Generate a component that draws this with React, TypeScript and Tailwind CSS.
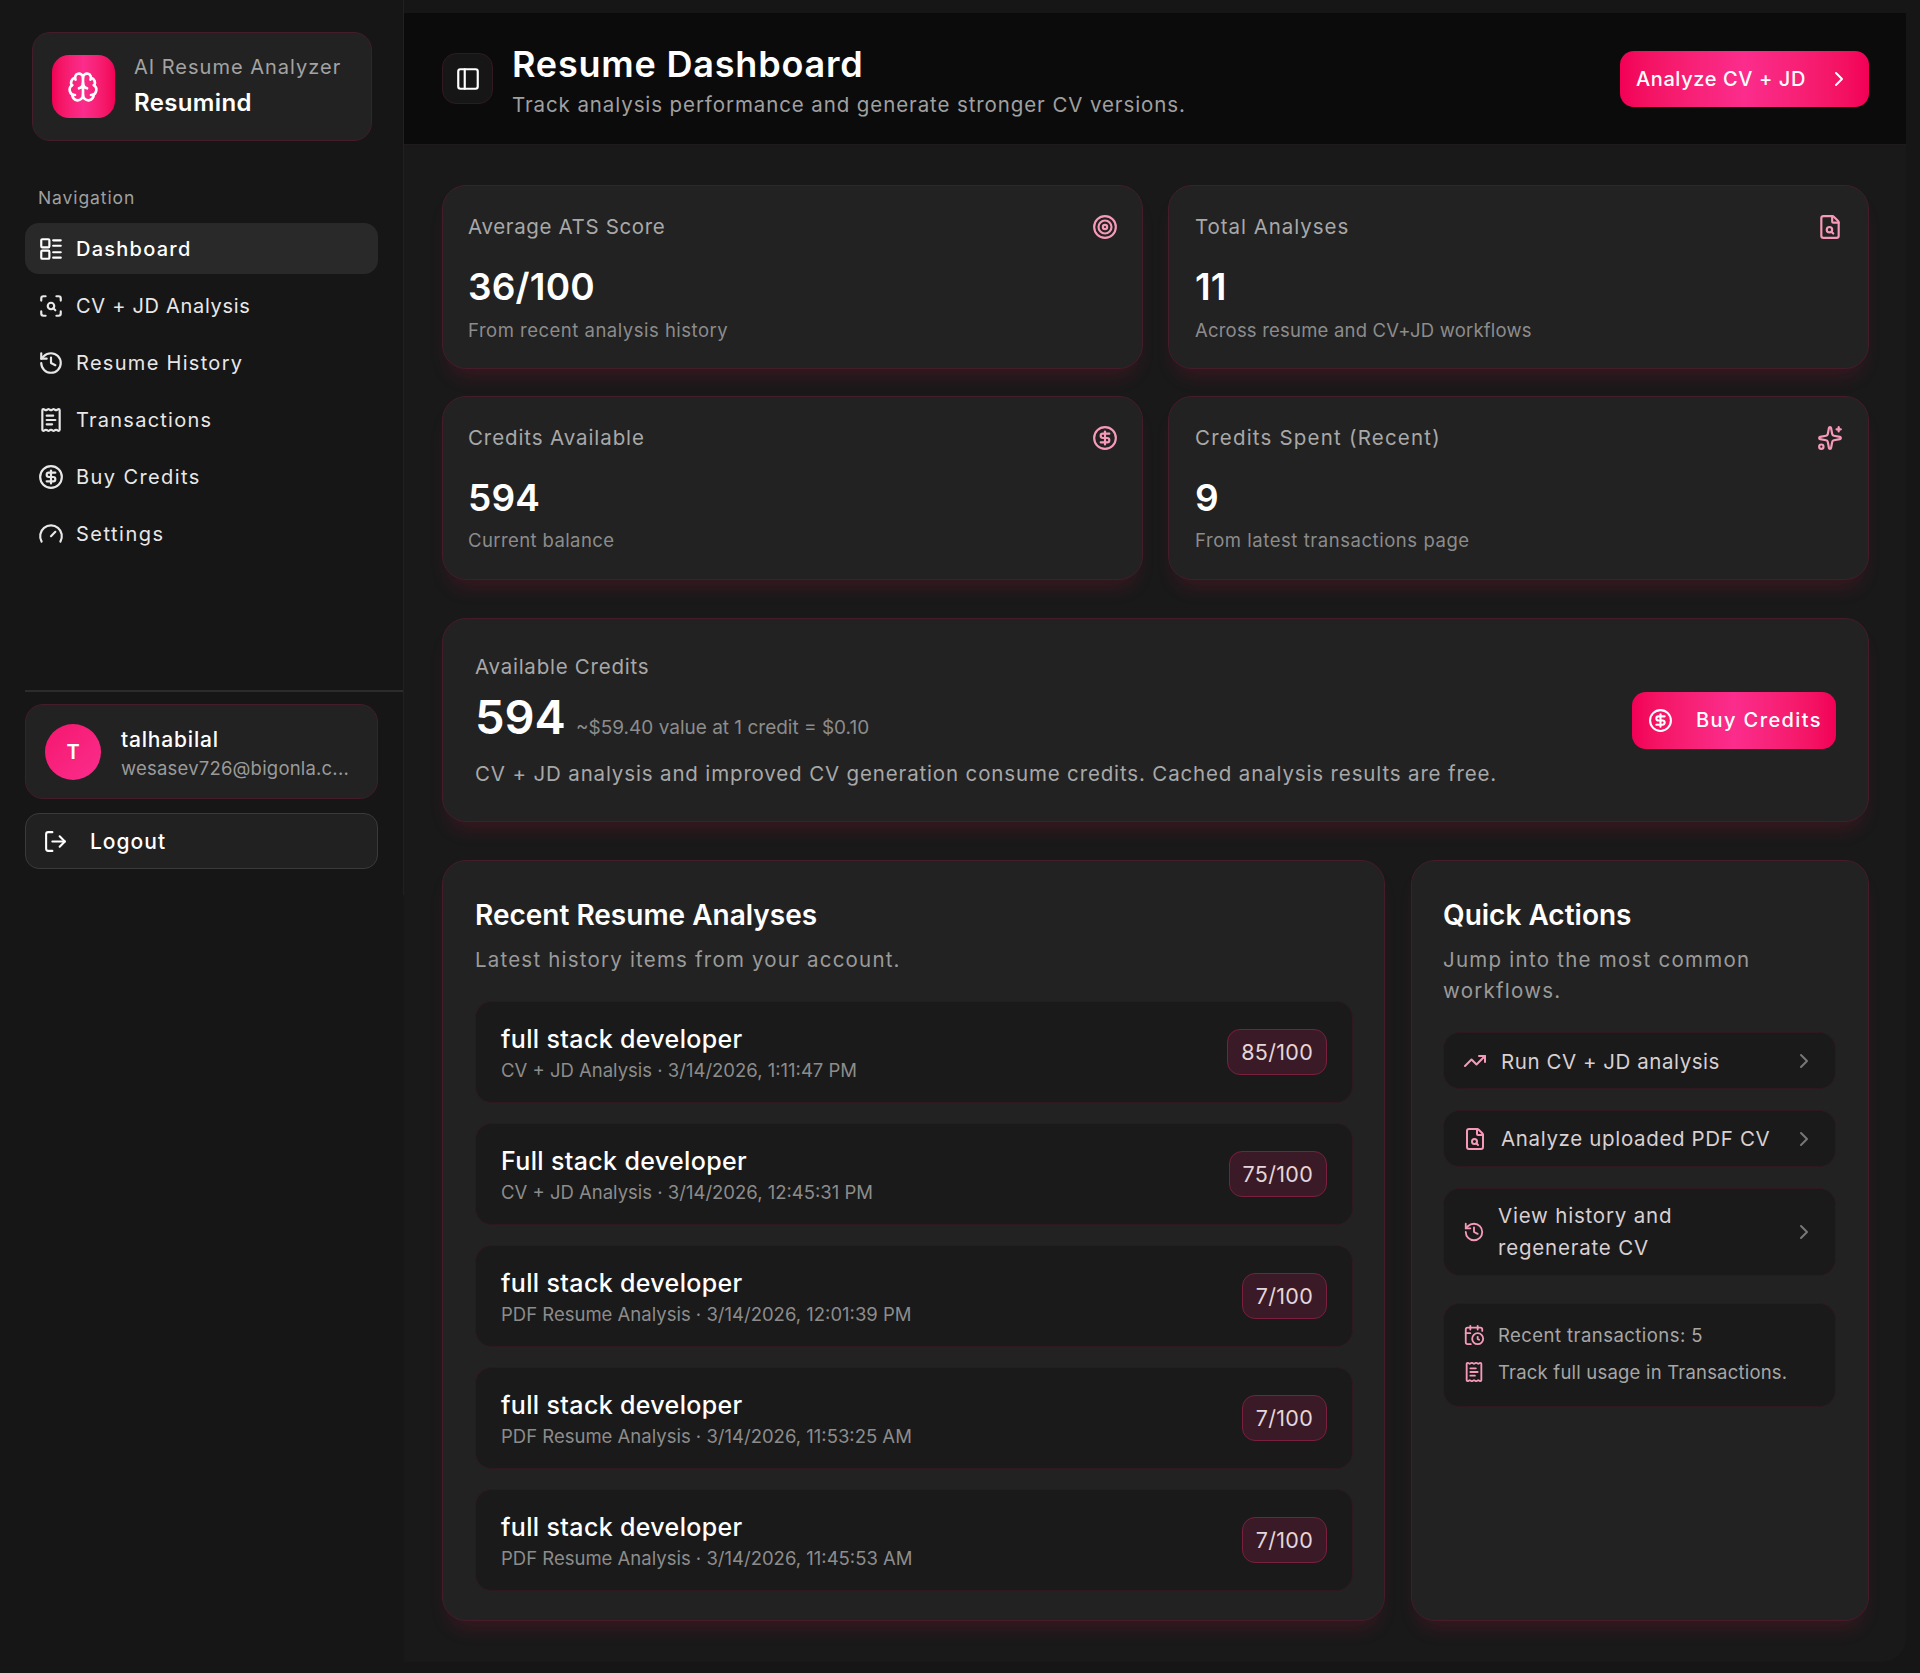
import React from "react";
import { Brain, ScanSearch, History, ReceiptText, CircleDollarSign, Gauge, LogOut, PanelLeft, ChevronRight, Target, FileSearch, Sparkles, TrendingUp, CalendarClock } from "lucide-react";

const Dash = ({ size = 24, className = "" }: { size?: number; strokeWidth?: number; className?: string }) => (
  <svg width={size} height={size} viewBox="0 0 24 24" fill="none" stroke="currentColor" strokeWidth="2" strokeLinecap="round" strokeLinejoin="round" className={className}>
    <rect x="3" y="3" width="7.5" height="7.5" rx="1" />
    <rect x="3" y="13.5" width="7.5" height="7.5" rx="1" />
    <path d="M14 4h7M14 9h7M14 15h7M14 20h7" />
  </svg>
);

const nav = [
  { icon: Dash, label: "Dashboard", active: true, track: "tracking-[1.25px]" },
  { icon: ScanSearch, label: "CV + JD Analysis", track: "tracking-[0.7px]" },
  { icon: History, label: "Resume History", track: "tracking-[1.3px]" },
  { icon: ReceiptText, label: "Transactions", track: "tracking-[1.25px]" },
  { icon: CircleDollarSign, label: "Buy Credits", track: "tracking-[1.4px]" },
  { icon: Gauge, label: "Settings", track: "tracking-[1.5px]" },
];

const stats = [
  { label: "Average ATS Score", lt: "tracking-[0.65px]", value: "36/100", note: "From recent analysis history", nt: "tracking-[0.5px] mt-[5px]", icon: Target, pad: "pl-[25px] pr-[24px]" },
  { label: "Total Analyses", lt: "tracking-[0.95px]", value: "11", note: "Across resume and CV+JD workflows", nt: "tracking-[0.2px] mt-[5px]", icon: FileSearch, pad: "pl-[26px] pr-[25px]" },
  { label: "Credits Available", lt: "tracking-[0.9px]", value: "594", note: "Current balance", nt: "tracking-[0.4px] mt-[4px]", icon: CircleDollarSign, pad: "pl-[25px] pr-[24px]" },
  { label: "Credits Spent (Recent)", lt: "tracking-[1.2px]", value: "9", note: "From latest transactions page", nt: "tracking-[0.55px] mt-[4px]", icon: Sparkles, pad: "pl-[26px] pr-[25px]" },
];

const rows = [
  { title: "full stack developer", sub: "CV + JD Analysis · 3/14/2026, 1:11:47 PM", score: "85/100" },
  { title: "Full stack developer", sub: "CV + JD Analysis · 3/14/2026, 12:45:31 PM", score: "75/100" },
  { title: "full stack developer", sub: "PDF Resume Analysis · 3/14/2026, 12:01:39 PM", score: "7/100" },
  { title: "full stack developer", sub: "PDF Resume Analysis · 3/14/2026, 11:53:25 AM", score: "7/100" },
  { title: "full stack developer", sub: "PDF Resume Analysis · 3/14/2026, 11:45:53 AM", score: "7/100" },
];

const card = "rounded-[24px] border border-[#451c2a] bg-[#222222] shadow-[0_14px_20px_-8px_rgba(200,20,70,0.2)]";
const inner = "rounded-[17px] border border-[#2f1820] bg-[#1a1a1a]";

export default function App() {
  return (
    <div className="flex min-h-[1673px] w-[1920px] bg-[#161616] font-[Inter,sans-serif] text-white">
      <aside className="flex h-[895px] w-[404px] shrink-0 flex-col border-r border-[#32191f] pb-[26px] pl-[25px]">
        <div className="ml-[7px] mr-[31px] mt-[32px] flex h-[109px] items-center gap-[19px] rounded-[18px] border border-[#451c2a] bg-[#222222] pl-[19px]">
          <div className="flex h-[63px] w-[63px] items-center justify-center rounded-[17px] bg-linear-to-r from-[#f20056] via-[#fb2c8c] to-[#f20056] pr-[1px]">
            <Brain size={32} strokeWidth={2} />
          </div>
          <div className="-mt-[3px]">
            <div className="text-[20px] leading-[35px] tracking-[1px] text-[#a3a3a3]">AI Resume Analyzer</div>
            <div className="text-[24px] font-semibold leading-[36px] tracking-[0.35px]">Resumind</div>
          </div>
        </div>
        <div className="mt-[42px] pl-[13px] pt-[1px] text-[17.5px] leading-[28px] tracking-[0.9px] text-[#a0a0a0]">Navigation</div>
        <nav className="mr-[25px] mt-[11px] flex flex-col gap-[6px]">
          {nav.map((n) => (
            <div key={n.label} className={`flex h-[51px] items-center gap-[12px] rounded-[14px] pl-[13px] text-[20px] ${n.track} ${n.active ? "bg-[#292929] font-medium text-white" : "text-[#e8e8e8]"}`}>
              <n.icon size={26} strokeWidth={2} className="shrink-0" />
              <span>{n.label}</span>
            </div>
          ))}
        </nav>
        <div className="mt-auto border-t-2 border-[#2c2c2c] pt-[12px]">
          <div className="mr-[25px] flex h-[95px] items-center gap-[20px] rounded-[18px] border border-[#451c2a] bg-[#222222] pl-[19px]">
            <div className="flex h-[56px] w-[56px] shrink-0 items-center justify-center rounded-full bg-linear-to-br from-[#f5156f] to-[#fb2c8c] text-[20px] font-semibold">T</div>
            <div className="w-[232px]">
              <div className="pt-[2px] text-[21px] font-medium leading-[30px] tracking-[0.8px]">talhabilal</div>
              <div className="whitespace-nowrap text-[18.5px] leading-[26px] tracking-[0.2px] text-[#9a9a9a]">wesasev726@bigonla.c...</div>
            </div>
          </div>
          <div className="mr-[25px] mt-[14px] flex h-[56px] items-center gap-[22px] rounded-[14px] border border-[#3a3a3a] bg-[#212121] pl-[17px] text-[21px] font-medium tracking-[1px]">
            <LogOut size={25} strokeWidth={2} />
            <span className="pt-[2px]">Logout</span>
          </div>
        </div>
      </aside>

      <main className="mr-[14px] mt-[13px] h-[1649px] flex-1 rounded-br-[24px] bg-[#191919]">
        <header className="flex h-[132px] items-center justify-between border-b border-[#1f1a1c] bg-[#0b0b0b] pl-[38px] pr-[37px]">
          <div className="flex items-center gap-[19px]">
            <div className="flex h-[51px] w-[51px] items-center justify-center rounded-[14px] border border-[#32191f] bg-[#161616]">
              <PanelLeft size={26} strokeWidth={2} />
            </div>
            <div className="pt-[3px]">
              <h1 className="text-[36px] font-semibold leading-[46px] tracking-[0.8px]">Resume Dashboard</h1>
              <p className="mt-[3px] text-[20.5px] leading-[30px] tracking-[0.9px] text-[#a0a0a0]">Track analysis performance and generate stronger CV versions.</p>
            </div>
          </div>
          <button className="flex h-[56px] w-[249px] items-center justify-between rounded-[14px] bg-linear-to-r from-[#f20056] via-[#fb2c8c] to-[#f20056] pl-[16px] pr-[18px] text-[20px] font-medium tracking-[0.6px] text-white">
            <span className="pt-[1px]">Analyze CV + JD</span>
            <ChevronRight size={24} strokeWidth={2} />
          </button>
        </header>

        <div className="pl-[38px] pr-[37px] pt-[40px]">
          <div className="grid grid-cols-2 gap-x-[25px] gap-y-[27px]">
            {stats.map((s) => (
              <div key={s.label} className={`${card} h-[184px] pt-[26px] ${s.pad}`}>
                <div className="flex items-center justify-between">
                  <span className={`text-[20.5px] leading-[30px] text-[#a8a8a8] ${s.lt}`}>{s.label}</span>
                  <s.icon size={26} strokeWidth={2} className="text-[#f79ab8]" />
                </div>
                <div className="mt-[21px] text-[37px] font-semibold leading-[48px] tracking-[0.2px]">{s.value}</div>
                <div className={`text-[18.5px] leading-[28px] text-[#8c8c8c] ${s.nt}`}>{s.note}</div>
              </div>
            ))}
          </div>

          <div className={`${card} mt-[38px] flex h-[204px] items-center justify-between pl-[32px] pr-[32px]`}>
            <div className="pt-[1px]">
              <div className="text-[20.5px] leading-[30px] tracking-[0.75px] text-[#a8a8a8]">Available Credits</div>
              <div className="mt-[5px] flex h-[60px] items-baseline gap-[10px]">
                <span className="text-[47px] font-semibold leading-[60px]">594</span>
                <span className="text-[19px] leading-none text-[#8c8c8c]">~$59.40 value at 1 credit = $0.10</span>
              </div>
              <div className="mt-[12px] text-[20.5px] leading-[30px] tracking-[0.85px] text-[#a8a8a8]">CV + JD analysis and improved CV generation consume credits. Cached analysis results are free.</div>
            </div>
            <button className="flex h-[57px] w-[204px] items-center gap-[23px] rounded-[14px] bg-linear-to-r from-[#f20056] via-[#fb2c8c] to-[#f20056] pl-[16px] text-[20px] font-medium tracking-[1.4px] text-white">
              <CircleDollarSign size={25} strokeWidth={2} />
              <span>Buy Credits</span>
            </button>
          </div>

          <div className="mt-[38px] grid grid-cols-[943px_458px] gap-[26px]">
            <section className={`${card} h-[761px] pl-[32px] pr-[31px] pt-[36px]`}>
              <h2 className="text-[28px] font-semibold leading-[36px]">Recent Resume Analyses</h2>
              <p className="mt-[12px] text-[20.5px] leading-[30px] tracking-[1.2px] text-[#9a9a9a]">Latest history items from your account.</p>
              <div className="mt-[26px] flex flex-col gap-[20px]">
                {rows.map((r, i) => (
                  <div key={i} className={`${inner} flex h-[102px] items-center justify-between px-[25px]`}>
                    <div className="pt-[4px]">
                      <div className="text-[25px] font-medium leading-[32px] tracking-[0.35px]">{r.title}</div>
                      <div className="text-[18.5px] leading-[31px] text-[#8c8c8c]">{r.sub}</div>
                    </div>
                    <div className="flex h-[46px] items-center rounded-[13px] border border-[#7a1f3d] bg-[#3a1a26] px-[13px] text-[21.5px] tracking-[0.3px] text-[#e4d6da]">{r.score}</div>
                  </div>
                ))}
              </div>
            </section>

            <section className={`${card} h-[761px] pl-[31px] pr-[32px] pt-[36px]`}>
              <h2 className="text-[28px] font-semibold leading-[36px]">Quick Actions</h2>
              <p className="mt-[11px] text-[20.5px] leading-[31px] tracking-[1.25px] text-[#9a9a9a]">Jump into the most common workflows.</p>
              <div className="mt-[26px] flex flex-col gap-[21px]">
                <div className={`${inner} flex h-[57px] items-center px-[19px] text-[20.5px] tracking-[0.55px] text-[#d8d0d3]`}>
                  <TrendingUp size={24} strokeWidth={2} className="shrink-0 text-[#f79ab8]" />
                  <span className="ml-[14px] flex-1 pt-[3px]">Run CV + JD analysis</span>
                  <ChevronRight size={24} strokeWidth={2} className="text-[#777777]" />
                </div>
                <div className={`${inner} flex h-[57px] items-center px-[19px] text-[20.5px] tracking-[0.65px] text-[#d8d0d3]`}>
                  <FileSearch size={24} strokeWidth={2} className="shrink-0 text-[#f79ab8]" />
                  <span className="ml-[14px] flex-1 pt-[2px]">Analyze uploaded PDF CV</span>
                  <ChevronRight size={24} strokeWidth={2} className="text-[#777777]" />
                </div>
                <div className={`${inner} flex h-[88px] items-center px-[19px] text-[20.5px] leading-[32px] tracking-[0.8px] text-[#d8d0d3]`}>
                  <History size={22} strokeWidth={2} className="shrink-0 text-[#f79ab8]" />
                  <span className="ml-[13px] flex-1">View history and<br />regenerate CV</span>
                  <ChevronRight size={24} strokeWidth={2} className="text-[#777777]" />
                </div>
              </div>
              <div className={`${inner} mt-[27px] flex h-[104px] flex-col justify-center gap-[9px] px-[19px] pb-[3px] text-[18.5px] leading-[28px] text-[#a6a6a6]`}>
                <div className="flex items-center gap-[13px] tracking-[0.45px]"><CalendarClock size={22} strokeWidth={2} className="text-[#f79ab8]" />Recent transactions: 5</div>
                <div className="flex items-center gap-[13px] tracking-[0.2px]"><ReceiptText size={22} strokeWidth={2} className="text-[#f79ab8]" />Track full usage in Transactions.</div>
              </div>
            </section>
          </div>
        </div>
      </main>
    </div>
  );
}
